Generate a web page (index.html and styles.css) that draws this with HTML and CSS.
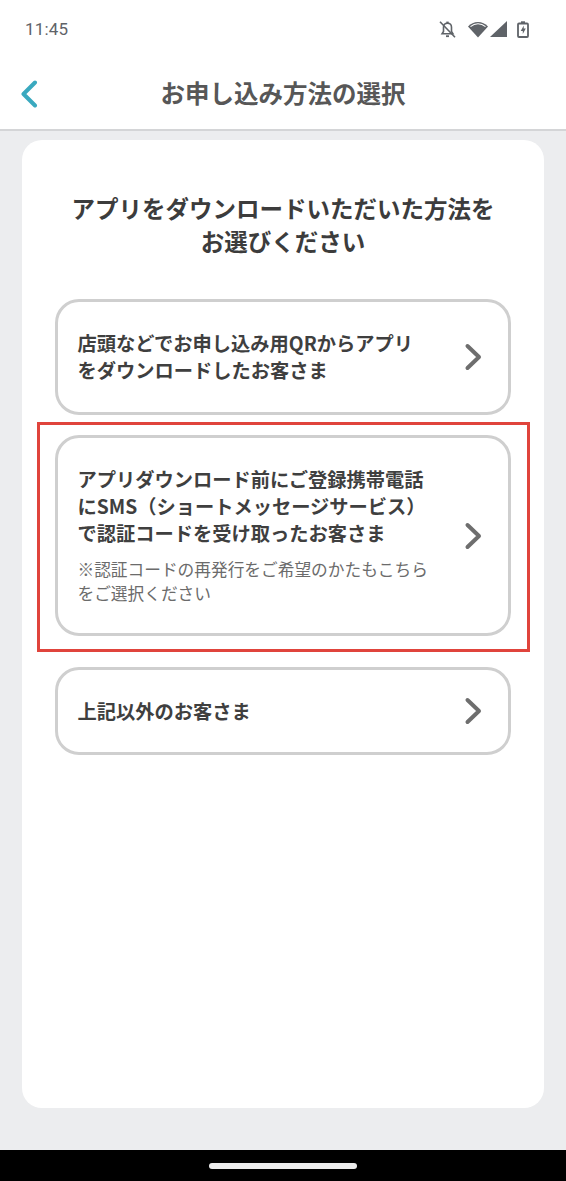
FILE: index.html
```html
<!DOCTYPE html>
<html lang="ja">
<head>
<meta charset="utf-8">
<title>お申し込み方法の選択</title>
<link rel="stylesheet" href="styles.css">
</head>
<body>
<div class="screen">
  <div class="status">
    <span class="time">11:45</span>
    <div class="status-icons">
      <svg class="ic-bell" width="17" height="17" viewBox="0 0 17 17"><path d="M8.500 2.200c2.500 0 4 1.800 4 4.100v4.200l1.400 2.200H3.100l1.400-2.200V6.300c0-2.300 1.500-4.100 4-4.100z" fill="none" stroke="#5f6368" stroke-width="1.600"/><rect x="7.300" y="0.600" width="2.400" height="2" fill="#5f6368"/><rect x="7" y="14.300" width="3" height="1.800" fill="#5f6368"/><path d="M1 .8 16 16.200" stroke="#5f6368" stroke-width="1.600"/></svg>
      <svg class="ic-wifi" width="20" height="17" viewBox="0 0 20 17"><path d="M0 5.500C2.700 2.700 6.100 1 10 1s7.300 1.700 10 4.500L10 16.500z" fill="#5f6368"/><path d="M2.500 5.600C4.600 3.800 7.200 2.700 10 2.700s5.400 1.100 7.500 2.900" fill="none" stroke="#fff" stroke-width="1.100"/></svg>
      <svg class="ic-signal" width="17" height="16" viewBox="0 0 17 16"><path d="M0 16 17 0v16z" fill="#5f6368"/></svg>
      <svg class="ic-batt" width="12" height="17" viewBox="0 0 12 17"><rect x="1" y="2.500" width="10" height="13.500" rx="1" fill="none" stroke="#5f6368" stroke-width="1.800"/><rect x="4" y="0.300" width="4" height="2.200" fill="#5f6368"/><path d="M6.800 4.500 3.700 10h2.100v3l3-5.500H6.700z" fill="#5f6368"/></svg>
    </div>
  </div>
  <header class="appbar">
    <svg class="back" width="18" height="28" viewBox="0 0 18 28"><path d="M15 2.500 3.500 14 15 25.500" fill="none" stroke="#3aa9bf" stroke-width="4" stroke-linecap="round" stroke-linejoin="round"/></svg>
    <h1 class="appbar-title">お申し込み方法の選択</h1>
  </header>
  <main class="content">
    <section class="card">
      <h2 class="heading">アプリをダウンロードいただいた方法を<br>お選びください</h2>
      <div class="options">
        <a class="option option-a">
          <div class="option-body">
            <p class="option-text">店頭などでお申し込み用QRからアプリ<br>をダウンロードしたお客さま</p>
          </div>
          <svg class="chev" width="20" height="28" viewBox="0 0 20 28"><path d="M3.500 3 15 14 3.500 25" fill="none" stroke="#6e6e6e" stroke-width="4" stroke-linecap="round" stroke-linejoin="round"/></svg>
        </a>
        <a class="option option-b">
          <div class="option-body">
            <p class="option-text">アプリダウンロード前にご登録携帯電話<br>にSMS（ショートメッセージサービス）<br>で認証コードを受け取ったお客さま</p>
            <p class="option-note">※認証コードの再発行をご希望のかたもこちら<br>をご選択ください</p>
          </div>
          <svg class="chev" width="20" height="28" viewBox="0 0 20 28"><path d="M3.500 3 15 14 3.500 25" fill="none" stroke="#6e6e6e" stroke-width="4" stroke-linecap="round" stroke-linejoin="round"/></svg>
          <span class="highlight"></span>
        </a>
        <a class="option option-c">
          <div class="option-body">
            <p class="option-text">上記以外のお客さま</p>
          </div>
          <svg class="chev" width="20" height="28" viewBox="0 0 20 28"><path d="M3.500 3 15 14 3.500 25" fill="none" stroke="#6e6e6e" stroke-width="4" stroke-linecap="round" stroke-linejoin="round"/></svg>
        </a>
      </div>
    </section>
  </main>
  <div class="navbar"><span class="pill"></span></div>
</div>
</body>
</html>
```
FILE: styles.css
```css
* { box-sizing: border-box; margin: 0; padding: 0; }
html, body { width: 566px; height: 1181px; overflow: hidden; }
body { font-family: "Noto Sans CJK JP", "Noto Sans", sans-serif; background: #ecedef; }
.screen { display: flex; flex-direction: column; height: 1181px; }
.status { height: 58px; background: #fff; display: flex; align-items: center; justify-content: space-between; padding: 0 37px 0 25px; }
.time { font-family: Roboto, sans-serif; font-size: 17px; color: #5f6368; letter-spacing: .2px; }
.status-icons { display: flex; align-items: center; gap: 2px; }
.ic-bell { margin-right: 10px; }
.ic-signal { margin-right: 8px; }
.appbar { height: 73px; background: #fff; border-bottom: 2px solid #d4d5d7; display: flex; align-items: center; justify-content: center; position: relative; padding-bottom: 2px; }
.back { position: absolute; left: 20px; top: 22px; }
.appbar-title { font-size: 24.500px; font-weight: 700; color: #575757; line-height: 30px; }
.content { flex: 1; padding: 9px 22px 42px; display: flex; }
.card { flex: 1; background: #fff; border-radius: 20px; padding: 52px 33px 0; }
.heading { font-size: 23.500px; font-weight: 700; color: #3c3c3c; line-height: 33px; text-align: center; white-space: nowrap; }
.options { margin-top: 41px; display: flex; flex-direction: column; }
.option { position: relative; display: flex; align-items: center; border: 3px solid #cfcfcf; border-radius: 24px; padding: 0 24px 0 19.500px; }
.option-a { height: 116px; }
.option-b { height: 201px; margin-top: 20px; }
.option-c { height: 88px; margin-top: 31px; }
.option-body { flex: 1; }
.option-text { font-size: 19.250px; font-weight: 700; color: #3f3f3f; line-height: 27px; white-space: nowrap; }
.option-note { font-size: 16.700px; color: #6b6b6b; line-height: 23.500px; margin-top: 11.500px; white-space: nowrap; }
.highlight { position: absolute; left: -21.500px; top: -16px; width: 493.500px; height: 230px; border: 3px solid #e0443c; pointer-events: none; }
.navbar { height: 31px; background: #000; display: flex; justify-content: center; padding-top: 13px; }
.pill { width: 148px; height: 6px; border-radius: 3px; background: #ececec; }
```
